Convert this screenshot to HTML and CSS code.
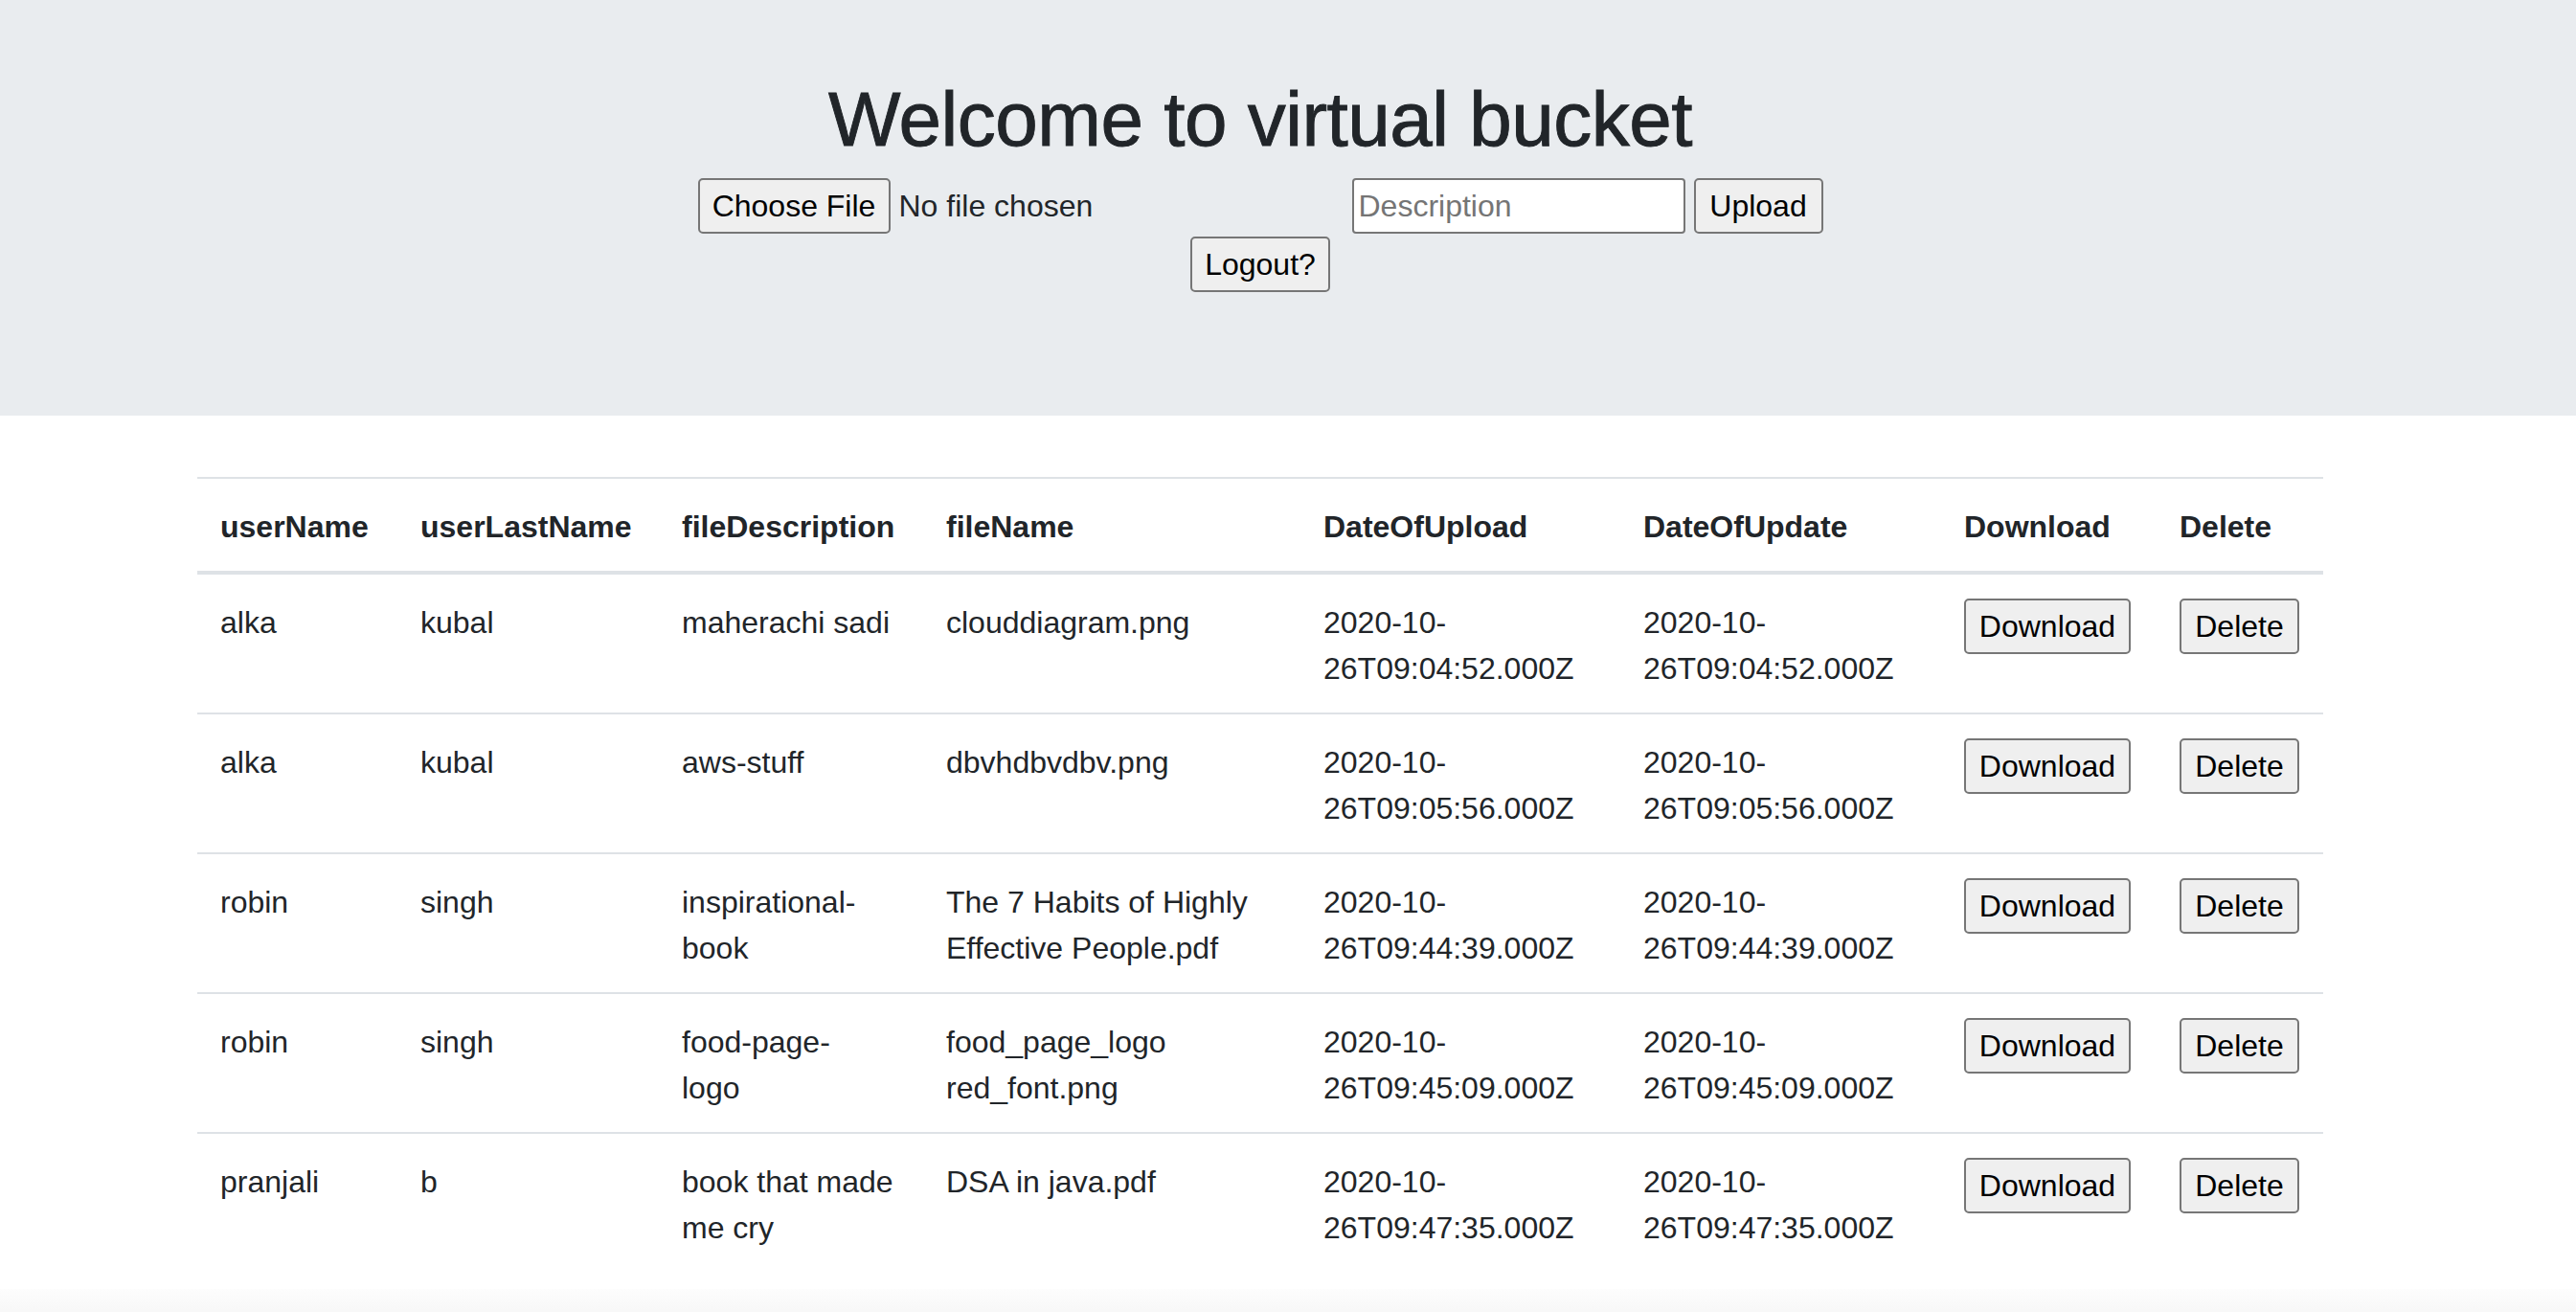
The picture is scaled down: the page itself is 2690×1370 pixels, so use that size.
FILE: index.html
```html
<!DOCTYPE html>
<html lang="en">
<head>
<meta charset="utf-8">
<title>Virtual bucket</title>
<link rel="stylesheet" href="styles.css">
</head>
<body>
  <header class="jumbotron">
    <div class="container">
      <h1 class="title">Welcome to virtual bucket</h1>
      <form class="upload-row">
        <label class="file-picker">
          <span class="native-btn btn-choose">Choose File</span>
          <span class="file-status">No file chosen</span>
          <input type="file" class="file-input">
        </label>
        <input type="text" class="desc-input" placeholder="Description">
        <button type="button" class="native-btn btn-upload">Upload</button>
      </form>
      <div class="logout-row">
        <button type="button" class="native-btn btn-logout">Logout?</button>
      </div>
    </div>
  </header>

  <main class="main">
    <div class="container">
      <table class="table">
        <colgroup>
          <col class="c-user">
          <col class="c-last">
          <col class="c-desc">
          <col class="c-file">
          <col class="c-upload">
          <col class="c-update">
          <col class="c-download">
          <col class="c-delete">
        </colgroup>
        <thead>
          <tr>
            <th>userName</th>
            <th>userLastName</th>
            <th>fileDescription</th>
            <th>fileName</th>
            <th>DateOfUpload</th>
            <th>DateOfUpdate</th>
            <th>Download</th>
            <th>Delete</th>
          </tr>
        </thead>
        <tbody>
          <tr>
            <td>alka</td>
            <td>kubal</td>
            <td>maherachi sadi</td>
            <td>clouddiagram.png</td>
            <td>2020-10-26T09:04:52.000Z</td>
            <td>2020-10-26T09:04:52.000Z</td>
            <td><button type="button" class="native-btn btn-download">Download</button></td>
            <td><button type="button" class="native-btn btn-delete">Delete</button></td>
          </tr>
          <tr>
            <td>alka</td>
            <td>kubal</td>
            <td>aws-stuff</td>
            <td>dbvhdbvdbv.png</td>
            <td>2020-10-26T09:05:56.000Z</td>
            <td>2020-10-26T09:05:56.000Z</td>
            <td><button type="button" class="native-btn btn-download">Download</button></td>
            <td><button type="button" class="native-btn btn-delete">Delete</button></td>
          </tr>
          <tr>
            <td>robin</td>
            <td>singh</td>
            <td>inspirational-book</td>
            <td>The 7 Habits of Highly Effective People.pdf</td>
            <td>2020-10-26T09:44:39.000Z</td>
            <td>2020-10-26T09:44:39.000Z</td>
            <td><button type="button" class="native-btn btn-download">Download</button></td>
            <td><button type="button" class="native-btn btn-delete">Delete</button></td>
          </tr>
          <tr>
            <td>robin</td>
            <td>singh</td>
            <td>food-page-<br>logo</td>
            <td>food_page_logo red_font.png</td>
            <td>2020-10-26T09:45:09.000Z</td>
            <td>2020-10-26T09:45:09.000Z</td>
            <td><button type="button" class="native-btn btn-download">Download</button></td>
            <td><button type="button" class="native-btn btn-delete">Delete</button></td>
          </tr>
          <tr>
            <td>pranjali</td>
            <td>b</td>
            <td>book that made me cry</td>
            <td>DSA in java.pdf</td>
            <td>2020-10-26T09:47:35.000Z</td>
            <td>2020-10-26T09:47:35.000Z</td>
            <td><button type="button" class="native-btn btn-download">Download</button></td>
            <td><button type="button" class="native-btn btn-delete">Delete</button></td>
          </tr>
        </tbody>
      </table>
    </div>
  </main>
  <div class="page-bottom"></div>
</body>
</html>
```

FILE: styles.css
```css
* {
  box-sizing: border-box;
}

html, body {
  margin: 0;
  padding: 0;
  background: #ffffff;
}

body {
  font-family: "Liberation Sans", Arial, sans-serif;
  font-size: 32px;
  line-height: 48px;
  color: #212529;
}

.container {
  max-width: 2280px;
  margin: 0 auto;
  padding: 0 30px;
}

/* ---------- header ---------- */
.jumbotron {
  background: #e9ecef;
  padding: 77px 58px 129px 0;
  margin-bottom: 64px;
}

.title {
  margin: 0 0 13px;
  font-size: 80px;
  line-height: 96px;
  font-weight: 400;
  letter-spacing: -0.5px;
  -webkit-text-stroke: 0.9px #212529;
  text-align: center;
  color: #212529;
}

.upload-row {
  display: flex;
  justify-content: center;
  align-items: center;
  margin: 0 0 3px;
}

.file-picker {
  width: 674px;
  display: flex;
  align-items: center;
  gap: 9px;
  cursor: pointer;
}

.file-input {
  display: none;
}

.file-status {
  color: #212529;
  white-space: nowrap;
}

.native-btn {
  display: inline-flex;
  align-items: center;
  justify-content: center;
  height: 58px;
  padding: 0 12px;
  background: #efefef;
  border: 2px solid #767676;
  border-radius: 5px;
  color: #000000;
  font-family: "Liberation Sans", Arial, sans-serif;
  font-size: 32px;
  line-height: 48px;
  white-space: nowrap;
}

.btn-choose {
  width: 201px;
}

.desc-input {
  width: 348px;
  height: 58px;
  margin-left: 9px;
  padding: 0 5px;
  background: #ffffff;
  border: 2px solid #767676;
  border-radius: 4px;
  font-family: "Liberation Sans", Arial, sans-serif;
  font-size: 32px;
  color: #212529;
}

.desc-input::placeholder {
  color: #757575;
}

.btn-upload {
  width: 135px;
  margin-left: 9px;
}

.logout-row {
  display: flex;
  justify-content: center;
}

.btn-logout {
  width: 146px;
}

/* ---------- table ---------- */
.main {
  padding-right: 58px;
}

.table {
  width: 100%;
  table-layout: fixed;
  border-collapse: collapse;
  color: #212529;
}

.c-user { width: 209px; }
.c-last { width: 273px; }
.c-desc { width: 276px; }
.c-file { width: 394px; }
.c-upload { width: 334px; }
.c-update { width: 335px; }
.c-download { width: 225px; }
.c-delete { width: 174px; }

.table th,
.table td {
  padding: 26px 24px 22px;
  text-align: left;
  vertical-align: top;
  border-top: 2px solid #dee2e6;
}

.table thead th {
  font-weight: 700;
  vertical-align: bottom;
  border-bottom: 4px solid #dee2e6;
}

.table td .native-btn {
  margin-top: -1px;
  vertical-align: top;
}

.btn-download {
  width: 174px;
}

.btn-delete {
  width: 125px;
}

.page-bottom {
  height: 40px;
  margin-top: 18px;
  background: linear-gradient(#fdfdfd, #f4f4f4);
}
```
